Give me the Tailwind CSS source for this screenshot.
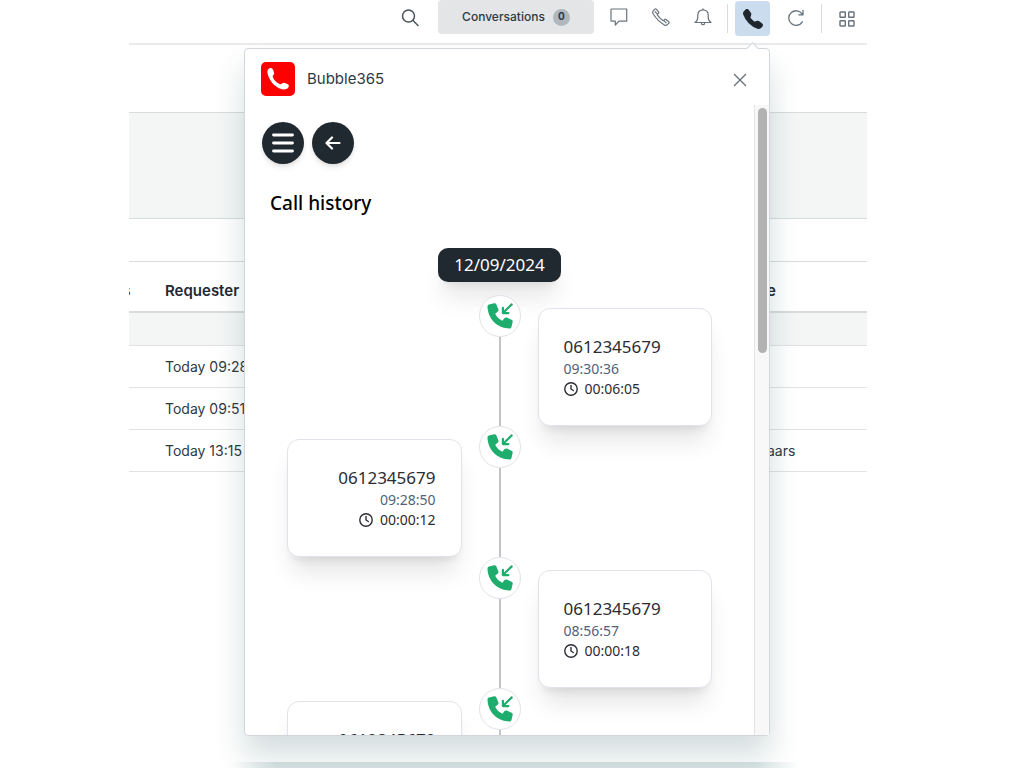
<!DOCTYPE html>
<html lang="en">
<head>
  <meta charset="UTF-8">
  <meta name="viewport" content="width=device-width, initial-scale=1.0">
  <title>Bubble365</title>
  <script src="https://cdn.jsdelivr.net/npm/@tailwindcss/browser@4"></script>
</head>
<body class="bg-white overflow-hidden font-['Inter',sans-serif] text-[#2f3941]">
  <!-- Shared icons -->
  <svg class="hidden">
    <symbol id="phone-fill" viewBox="0 0 16 16">
      <path fill="currentColor" fill-rule="evenodd" d="M1.885.511a1.745 1.745 0 0 1 2.61.163L6.29 2.98c.329.423.445.974.315 1.494l-.547 2.19a.68.68 0 0 0 .178.643l2.457 2.457a.68.68 0 0 0 .644.178l2.189-.547a1.75 1.75 0 0 1 1.494.315l2.306 1.794c.829.645.905 1.87.163 2.611l-1.034 1.034c-.74.74-1.846 1.065-2.877.702a18.6 18.6 0 0 1-7.01-4.42 18.6 18.6 0 0 1-4.42-7.009c-.362-1.03-.037-2.137.703-2.877z"/>
    </symbol>
    <symbol id="call-in" viewBox="0 0 26 26">
      <path fill="currentColor" d="M2 1.500 7.200.3c.9-.2 1.700.2 2.100 1l2.100 5.100c.3.8.1 1.600-.5 2.100L8.200 10.700c1.500 3.200 4.100 5.700 7.200 7.100l2.200-2.700c.5-.6 1.400-.8 2.100-.5l5 2.100c.8.4 1.200 1.200 1 2.100l-1.200 5.200c-.2.9-.9 1.500-1.800 1.500C10.300 25.500.5 15.600.5 3.300c0-.9.6-1.600 1.500-1.800z"/>
      <path d="M24.700 1.400 16.200 9.700M15.900 4.800v5.300H21.400" fill="none" stroke="currentColor" stroke-width="2.200" stroke-linecap="round" stroke-linejoin="round"/>
    </symbol>
    <symbol id="clock" viewBox="0 0 14 14">
      <g fill="none" stroke="currentColor" stroke-width="1.400" stroke-linecap="round" stroke-linejoin="round">
        <circle cx="7" cy="7" r="6.200"/>
        <path d="M7 3.500V7l2.300 1.500"/>
      </g>
    </symbol>
  </svg>

  <div class="relative h-screen ml-[129px] mr-[157px] overflow-hidden">
    <!-- Top bar -->
    <header class="flex items-start justify-end gap-2 h-[45px] pr-[3px] border-b-2 border-[#e9ebed] text-[#68737d]">
      <button type="button" aria-label="Search" class="flex items-center justify-center w-10 h-9 text-[#49545c]">
        <svg class="size-[18px]" viewBox="0 0 18 18" fill="none" stroke="currentColor" stroke-width="1.500" stroke-linecap="round"><circle cx="7.500" cy="7" r="6"/><path d="m12 11.500 5 5"/></svg>
      </button>
      <button type="button" class="flex items-center justify-center gap-2 w-[156px] h-[34px] rounded bg-[#e3e5e7] text-xs font-medium text-[#2f3941]">
        Conversations
        <span class="flex items-center justify-center size-[17px] rounded-full bg-[#b0b8be] text-[10px] font-bold">0</span>
      </button>
      <button type="button" aria-label="Chat" class="flex items-center justify-center w-[34px] h-[34px]">
        <svg class="size-[18px]" viewBox="0 0 18 18" fill="none" stroke="currentColor" stroke-width="1.200" stroke-linejoin="round"><path d="M1.500 1h15.200v12.200H9L5.300 17v-3.800H1.500a.5.500 0 0 1-.5-.5V1.500a.5.500 0 0 1 .5-.5z"/></svg>
      </button>
      <button type="button" aria-label="Talk" class="flex items-center justify-center w-[34px] h-[34px]">
        <svg class="size-[18px]" viewBox="0 0 18 18" fill="none" stroke="currentColor" stroke-width="1.200" stroke-linejoin="round"><path d="M1.300 2.800 2.800 1.200c.4-.4 1-.4 1.400 0l2.300 2.700c.4.4.3 1-.1 1.400l-.8.8c-.3.300-.3.700-.1 1 1.400 2 3.200 3.800 5.300 5.300.4.200.8.2 1-.1l.7-.7c.4-.4 1-.5 1.500-.1l2.800 2.300c.4.4.5 1 .1 1.400l-1.500 1.500c-.8.8-2 .8-3 .2C7.800 14.200 3.900 10.200 1.100 5.700c-.6-.9-.5-2.100.2-2.900zM2.800 3.500l3 2.900M11.600 12.300l2.800 2.800"/></svg>
      </button>
      <button type="button" aria-label="Notifications" class="flex items-center justify-center w-[34px] h-[34px]">
        <svg class="size-[18px]" viewBox="0 0 18 18" fill="none" stroke="currentColor" stroke-width="1.200" stroke-linecap="round" stroke-linejoin="round"><path d="M1 14.500c2-1.300 2.800-3 2.800-5.500V7C3.800 4 6 1.800 9 1.800S14.200 4 14.200 7v2c0 2.500.8 4.200 2.800 5.500zM9 1.800V.8"/><path d="M7.500 14.800v1c.2 1.200 2.800 1.200 3 0v-1"/></svg>
      </button>
      <div class="-mx-px w-px h-[29px] mt-1 bg-[#d8dcde]"></div>
      <button type="button" aria-label="Bubble365" class="flex items-center justify-center w-[35px] h-[35px] mt-px rounded bg-[#cadcee] text-[#1f272d]">
        <svg class="size-5"><use href="#phone-fill"/></svg>
      </button>
      <button type="button" aria-label="Refresh" class="flex items-center justify-center w-[35px] h-9">
        <svg class="size-[18px]" viewBox="0 0 18 18" fill="none" stroke="currentColor" stroke-width="1.300" stroke-linecap="round" stroke-linejoin="round"><path d="M15.300 12.800A7.300 7.300 0 1 1 15.300 5.300M16 1.500v4.300h-4.300"/></svg>
      </button>
      <div class="w-px h-[29px] mt-1 bg-[#d8dcde]"></div>
      <button type="button" aria-label="Products" class="flex items-center justify-center w-[34px] h-[38px]">
        <svg class="size-4" viewBox="0 0 16 16" fill="none" stroke="currentColor" stroke-width="1.400"><rect x="1" y="1" width="5.300" height="5.300" rx=".5"/><rect x="9.700" y="1" width="5.300" height="5.300" rx=".5"/><rect x="1" y="9.700" width="5.300" height="5.300" rx=".5"/><rect x="9.700" y="9.700" width="5.300" height="5.300" rx=".5"/></svg>
      </button>
    </header>

    <!-- Ticket list behind the popup -->
    <main>
      <div class="h-[67px]"></div>
      <div class="h-[107px] border-y border-[#d8dcde] bg-[#f4f6f6]"></div>
      <div class="h-[42px]"></div>
      <table class="w-full table-fixed border-collapse text-left text-sm text-[#2f3941]">
        <colgroup>
          <col class="w-9">
          <col>
          <col class="w-[100px]">
        </colgroup>
        <thead>
          <tr class="h-[50px] border-t border-b-2 border-[#d8dcde] text-[15px] text-[#1f2933]">
            <th class="pt-2"><span class="-ml-[7px]">s</span></th>
            <th class="pt-2 font-semibold">Requester</th>
            <th class="pt-2 font-semibold">e</th>
          </tr>
        </thead>
        <tbody>
          <tr class="h-[34px] border-b border-[#e0e3e5] bg-[#f4f6f6]"><td colspan="3"></td></tr>
          <tr class="h-[42px] border-b border-[#e0e3e5]"><td></td><td>Today 09:28</td><td></td></tr>
          <tr class="h-[42px] border-b border-[#e0e3e5]"><td></td><td>Today 09:51</td><td></td></tr>
          <tr class="h-[42px] border-b border-[#e0e3e5]"><td><span class="-ml-[7px]">s</span></td><td>Today 13:15</td><td>aars</td></tr>
        </tbody>
      </table>
    </main>

    <!-- Footer strip -->
    <div class="absolute bottom-0 left-[101px] right-[67px] h-1.5 bg-[linear-gradient(to_right,transparent,#dae4e4_8%,#dae4e4_92%,transparent)]"></div>

    <!-- App popup -->
    <section class="absolute top-12 bottom-8 left-[115px] right-[97px] flex flex-col rounded border border-[#d0d6d9] bg-white shadow-[0_20px_30px_rgba(23,73,77,0.18)]">
      <div class="absolute -top-[5px] right-3 size-[9px] rotate-45 border-t border-l border-[#d0d6d9] bg-white"></div>

      <div class="flex items-center gap-3 h-14 shrink-0 pt-1 pl-4 pr-[22px]">
        <div class="flex items-center justify-center size-[34px] rounded-[5px] bg-[#fe0000] text-white">
          <svg class="size-6" viewBox="0 0 24 24"><path fill="currentColor" d="M1.800 2.800C3 1 5.500.5 6.400 1.700c.9 1.200 1.600 3.200 1.800 4.900.1 1.300-1.800 1.700-1.500 3 .9 3.400 4.200 6.700 7.600 7.600 1.400.4 1.900-1.600 3.200-1.500 1.700.2 3.800 1 4.900 2 1.200 1-.2 3.500-2 4.400-2.800 1.400-8.800-.8-12.700-4.700C3.500 13.200.300 6.300 1.800 2.800z"/></svg>
        </div>
        <h1 class="flex-1 text-[15px]">Bubble365</h1>
        <button type="button" aria-label="Close" class="pt-0.5 text-[#68737d]">
          <svg class="size-[14px]" viewBox="0 0 14 14" fill="none" stroke="currentColor" stroke-width="1.400" stroke-linecap="round"><path d="m1.500 1.500 11 11M12.500 1.500l-11 11"/></svg>
        </button>
      </div>

      <div class="flex flex-1 min-h-0">
        <div class="flex-1 overflow-hidden pt-[17px] font-['Noto_Sans',sans-serif] text-[#2c2c33]">
          <div class="flex gap-2 pl-[17px]">
            <button type="button" aria-label="Menu" class="flex items-center justify-center size-[42px] rounded-full bg-[#212930] text-white shadow-md">
              <svg class="w-[22px] h-5" viewBox="0 0 22 20" stroke="currentColor" stroke-width="2.800" stroke-linecap="round"><path d="M1.500 2h19M1.500 10h19M1.500 18h19"/></svg>
            </button>
            <button type="button" aria-label="Back" class="flex items-center justify-center size-[42px] rounded-full bg-[#212930] text-white shadow-md">
              <svg class="w-4 h-[14px]" viewBox="0 0 16 14" fill="none" stroke="currentColor" stroke-width="2.200" stroke-linecap="round" stroke-linejoin="round"><path d="M14.500 7H1.500M7 1.500 1.500 7 7 12.500"/></svg>
            </button>
          </div>

          <h2 class="mt-[25px] pl-[25px] text-[19px]/[28px] font-medium text-black">Call history</h2>

          <div class="flex justify-center mt-[31px] mb-[13px]">
            <span class="w-[123px] rounded-[10px] bg-[#212930] text-center text-[17px]/[34px] text-white shadow-xl">12/09/2024</span>
          </div>

          <!-- Timeline -->
          <ol class="px-[42px]">
            <li class="grid grid-cols-[1fr_42px_1fr] gap-[17px] h-[131px]">
              <div class="col-start-2 flex flex-col items-center">
                <div class="flex items-center justify-center size-[42px] shrink-0 rounded-full border border-[#e2e2ea] bg-white text-[#1fad6e]"><svg class="size-[26px]"><use href="#call-in"/></svg></div>
                <div class="flex-1 w-0.5 bg-[#c3c3c8]"></div>
              </div>
              <div class="h-[118px] mt-[13px] p-[25px] rounded-xl border border-[#e2e2ea] bg-white shadow-xl">
                <p class="text-[17px]/[25px]">0612345679</p>
                <p class="text-sm/[20px] text-[#52617c]">09:30:36</p>
                <p class="flex items-center gap-[7px] text-sm/[20px]"><svg class="size-[14px]"><use href="#clock"/></svg>00:06:05</p>
              </div>
            </li>
            <li class="grid grid-cols-[1fr_42px_1fr] gap-[17px] h-[131px]">
              <div class="h-[118px] mt-[13px] p-[25px] rounded-xl border border-[#e2e2ea] bg-white text-right shadow-xl">
                <p class="text-[17px]/[25px]">0612345679</p>
                <p class="text-sm/[20px] text-[#52617c]">09:28:50</p>
                <p class="flex items-center justify-end gap-[7px] text-sm/[20px]"><svg class="size-[14px]"><use href="#clock"/></svg>00:00:12</p>
              </div>
              <div class="flex flex-col items-center">
                <div class="flex items-center justify-center size-[42px] shrink-0 rounded-full border border-[#e2e2ea] bg-white text-[#1fad6e]"><svg class="size-[26px]"><use href="#call-in"/></svg></div>
                <div class="flex-1 w-0.5 bg-[#c3c3c8]"></div>
              </div>
            </li>
            <li class="grid grid-cols-[1fr_42px_1fr] gap-[17px] h-[131px]">
              <div class="col-start-2 flex flex-col items-center">
                <div class="flex items-center justify-center size-[42px] shrink-0 rounded-full border border-[#e2e2ea] bg-white text-[#1fad6e]"><svg class="size-[26px]"><use href="#call-in"/></svg></div>
                <div class="flex-1 w-0.5 bg-[#c3c3c8]"></div>
              </div>
              <div class="h-[118px] mt-[13px] p-[25px] rounded-xl border border-[#e2e2ea] bg-white shadow-xl">
                <p class="text-[17px]/[25px]">0612345679</p>
                <p class="text-sm/[20px] text-[#52617c]">08:56:57</p>
                <p class="flex items-center gap-[7px] text-sm/[20px]"><svg class="size-[14px]"><use href="#clock"/></svg>00:00:18</p>
              </div>
            </li>
            <li class="grid grid-cols-[1fr_42px_1fr] gap-[17px] h-[131px]">
              <div class="h-[118px] mt-[13px] p-[25px] rounded-xl border border-[#e2e2ea] bg-white text-right shadow-xl">
                <p class="text-[17px]/[25px]">0612345679</p>
              </div>
              <div class="flex flex-col items-center">
                <div class="flex items-center justify-center size-[42px] shrink-0 rounded-full border border-[#e2e2ea] bg-white text-[#1fad6e]"><svg class="size-[26px]"><use href="#call-in"/></svg></div>
                <div class="flex-1 w-0.5 bg-[#c3c3c8]"></div>
              </div>
            </li>
          </ol>
        </div>

        <!-- Scrollbar -->
        <div class="w-[15px] pt-[3px] pl-[3px] border-l border-[#e4e4e4] bg-[#f8f8f8]">
          <div class="w-[9px] h-[245px] rounded-full bg-[#b2b2b2]"></div>
        </div>
      </div>
    </section>
  </div>
</body>
</html>
